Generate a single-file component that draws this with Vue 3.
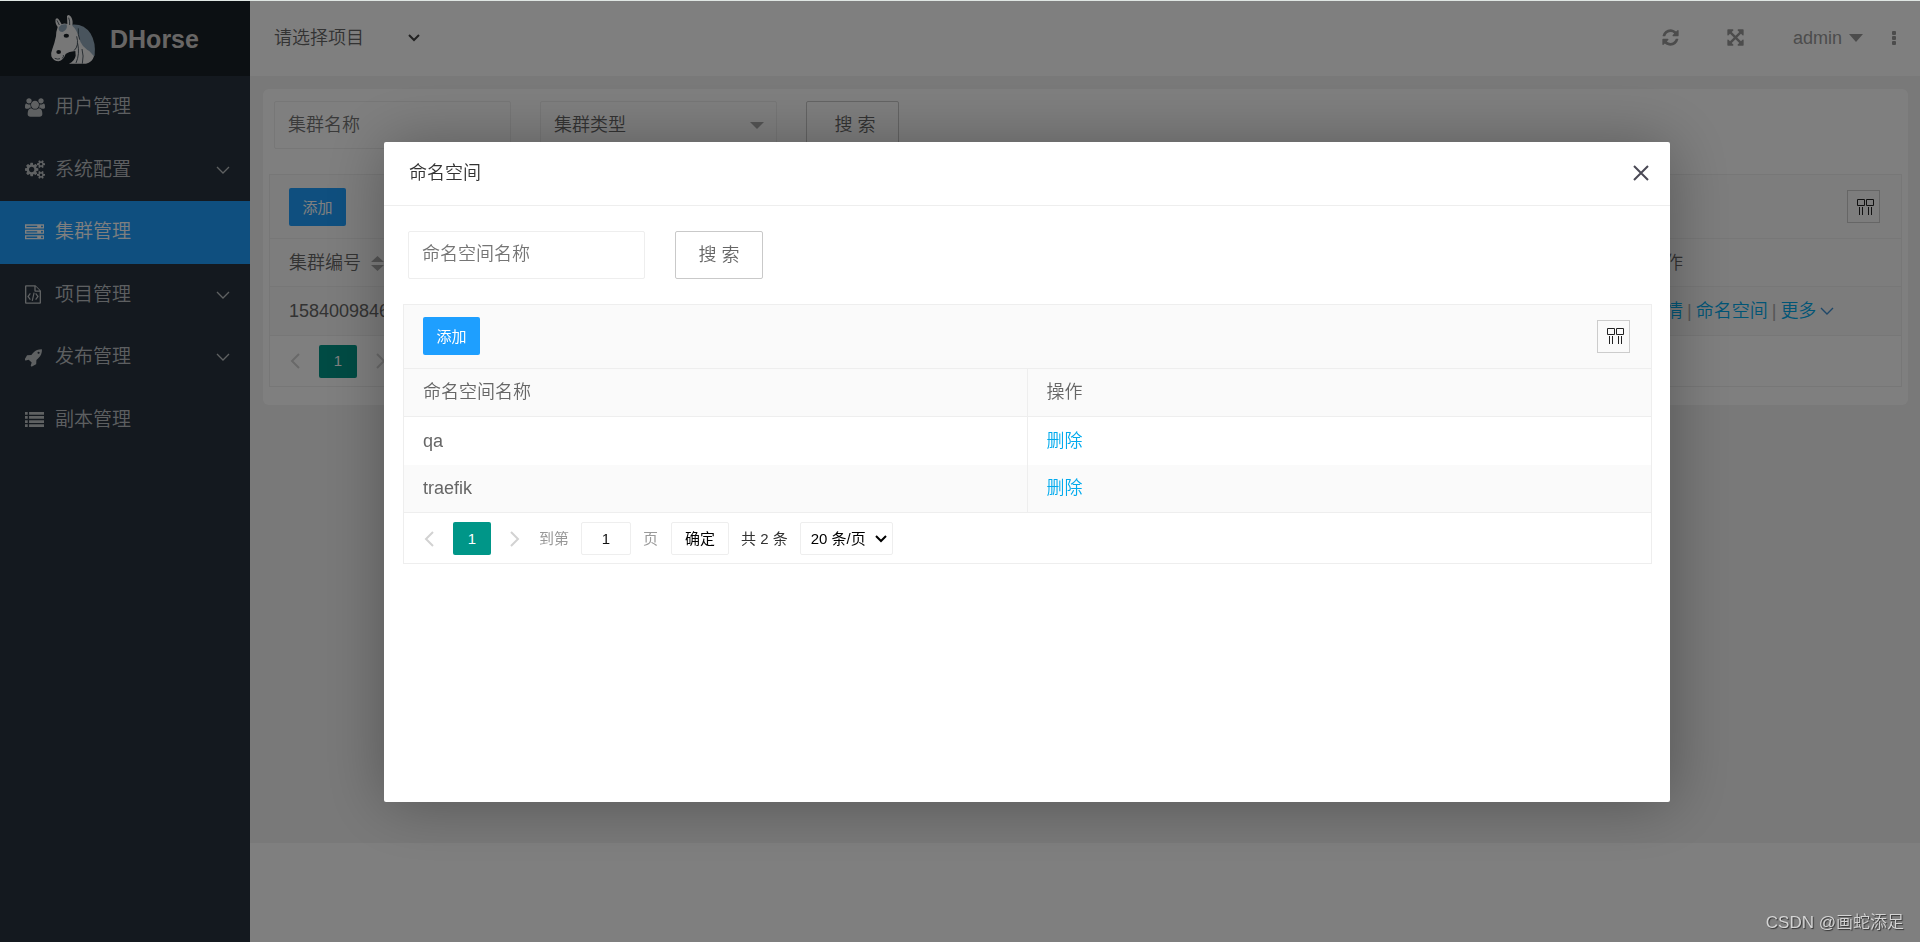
<script setup>
import { ref } from 'vue'

const menu = [
  { label: '用户管理', icon: 'users' },
  { label: '系统配置', icon: 'cogs', children: true },
  { label: '集群管理', icon: 'server', active: true },
  { label: '项目管理', icon: 'code', children: true },
  { label: '发布管理', icon: 'rocket', children: true },
  { label: '副本管理', icon: 'list' }
]

const icons = {
  users: {
    box: '-64 0 1920 1792',
    width: 20,
    path: 'M529 896q-162 5-265 128h-134q-82 0-138-40.5t-56-118.5q0-353 124-353 6 0 43.5 21t97.5 42.5 119 21.5q67 0 133-23-5 37-5 66 0 139 81 256zm1071 637q0 120-73 189.5t-194 69.5h-874q-121 0-194-69.5t-73-189.5q0-53 3.5-103.5t14-109 26.5-108.5 43-97.5 62-81 85.5-53.5 111.5-20q10 0 43 21.5t73 48 107 48 135 21.5 135-21.5 107-48 73-48 43-21.5q61 0 111.5 20t85.5 53.5 62 81 43 97.5 26.5 108.5 14 109 3.5 103.5zm-1024-1277q0 106-75 181t-181 75-181-75-75-181 75-181 181-75 181 75 75 181zm704 384q0 159-112.5 271.5t-271.5 112.5-271.5-112.5-112.5-271.5 112.5-271.5 271.5-112.5 271.5 112.5 112.5 271.5zm576 225q0 78-56 118.5t-138 40.5h-134q-103-123-265-128 81-117 81-256 0-29-5-66 66 23 133 23 59 0 119-21.5t97.5-42.5 43.5-21q124 0 124 353zm-128-609q0 106-75 181t-181 75-181-75-75-181 75-181 181-75 181 75 75 181z'
  },
  cogs: {
    box: '-64 0 1920 1792',
    width: 20,
    path: 'M832 896q0-106-75-181t-181-75-181 75-75 181 75 181 181 75 181-75 75-181zm768 512q0-52-38-90t-90-38-90 38-38 90q0 53 37.5 90.5t90.5 37.5 90.5-37.5 37.5-90.5zm0-1024q0-52-38-90t-90-38-90 38-38 90q0 53 37.5 90.5t90.5 37.5 90.5-37.5 37.5-90.5zm-384 421v185q0 10-7 19.5t-16 10.5l-155 24q-11 35-32 76 34 48 90 115 7 11 7 20 0 12-7 19-23 30-82.5 89.5t-78.5 59.5q-11 0-21-7l-115-90q-37 19-77 31-11 108-23 155-7 24-30 24h-186q-11 0-20-7.5t-10-17.5l-23-153q-34-10-75-31l-118 89q-7 7-20 7-11 0-21-8-144-133-144-160 0-9 7-19 10-14 41-53t47-61q-23-44-35-82l-152-24q-10-1-17-9.5t-7-19.5v-185q0-10 7-19.5t16-10.5l155-24q11-35 32-76-34-48-90-115-7-11-7-20 0-12 7-20 22-30 82-89t79-59q11 0 21 7l115 90q34-18 77-32 11-108 23-154 7-24 30-24h186q11 0 20 7.5t10 17.5l23 153q34 10 75 31l118-89q8-7 20-7 11 0 21 8 144 133 144 160 0 8-7 19-12 16-42 54t-45 60q23 48 34 82l152 23q10 2 17 10.5t7 19.5zm640 533v140q0 16-149 31-12 27-30 52 51 113 51 138 0 4-4 7-122 71-124 71-8 0-46-47t-52-68q-20 2-30 2t-30-2q-14 21-52 68t-46 47q-2 0-124-71-4-3-4-7 0-25 51-138-18-25-30-52-149-15-149-31v-140q0-16 149-31 13-29 30-52-51-113-51-138 0-4 4-7 4-2 35-20t59-34 30-16q8 0 46 46.5t52 67.5q20-2 30-2t30 2q51-71 92-112l6-2q4 0 124 70 4 3 4 7 0 25-51 138 17 23 30 52 149 15 149 31zm0-1024v140q0 16-149 31-12 27-30 52 51 113 51 138 0 4-4 7-122 71-124 71-8 0-46-47t-52-68q-20 2-30 2t-30-2q-14 21-52 68t-46 47q-2 0-124-71-4-3-4-7 0-25 51-138-18-25-30-52-149-15-149-31v-140q0-16 149-31 13-29 30-52-51-113-51-138 0-4 4-7 4-2 35-20t59-34 30-16q8 0 46 46.5t52 67.5q20-2 30-2t30 2q51-71 92-112l6-2q4 0 124 70 4 3 4 7 0 25-51 138 17 23 30 52 149 15 149 31z'
  },
  server: {
    box: '0 0 1792 1792',
    width: 19,
    path: 'M128 1408h1024v-128h-1024v128zm0-512h1024v-128h-1024v128zm1568 448q0-40-28-68t-68-28-68 28-28 68 28 68 68 28 68-28 28-68zm-1568-960h1024v-128h-1024v128zm1568 448q0-40-28-68t-68-28-68 28-28 68 28 68 68 28 68-28 28-68zm0-512q0-40-28-68t-68-28-68 28-28 68 28 68 68 28 68-28 28-68zm96 832v384h-1792v-384h1792zm0-512v384h-1792v-384h1792zm0-512v384h-1792v-384h1792z'
  },
  code: {
    box: '0 0 1536 1792',
    width: 16,
    path: 'M96 0H1000L1536 536V1696Q1536 1792 1440 1792H96Q0 1792 0 1696V96Q0 0 96 0ZM128 128V1664H1408V640H992Q896 640 896 544V128ZM1024 136V512H1400ZM470 760L560 830 370 1090 560 1350 470 1420 230 1120V1060ZM1066 760L976 830 1166 1090 976 1350 1066 1420 1306 1120V1060ZM820 700L930 720 750 1530 640 1505Z'
  },
  rocket: {
    box: '64 0 1792 1792',
    width: 19,
    path: 'M1440 448q0-40-28-68t-68-28-68 28-28 68 28 68 68 28 68-28 28-68zm224-288q0 249-75.5 430.5t-253.5 360.5q-81 80-195 176l-20 379q-2 16-16 26l-384 224q-7 4-16 4-12 0-23-9l-64-64q-13-14-8-32l85-276-281-281-276 85q-3 1-9 1-14 0-23-9l-64-64q-17-19-5-39l224-384q10-14 26-16l379-20q96-114 176-195 188-187 358-258t431-71q14 0 24 9.5t10 22.5z'
  },
  list: {
    box: '0 0 1792 1792',
    width: 19,
    path: 'M0 1344H256V1600H0ZM0 960H256V1216H0ZM0 576H256V832H0ZM0 192H256V448H0ZM384 1344H1792V1600H384ZM384 960H1792V1216H384ZM384 576H1792V832H384ZM384 192H1792V448H384Z'
  }
}

const clusters = [{ id: '1584009846' }]
const namespaces = ref(['qa', 'traefik'])
const jumpPage = ref('1')
</script>

<template>
  <div class="app">
    <aside class="side">
      <div class="logo">
        <svg class="horse" viewBox="150 42 138 156" aria-hidden="true">
          <path fill="#93a9ba" d="M206 78Q250 70 272 104Q288 130 284 170L262 176L232 140Z" />
          <path fill="#eeeeee" d="M167 60Q172 54 177 62L185 76Q192 72 202 75L201 52Q205 43 213 53Q220 64 217 80Q232 84 236 108Q240 128 256 143Q270 158 282 172Q276 192 258 194H207Q224 186 227 170L226 156Q206 158 197 165Q190 184 176 187Q160 187 154 172Q152 162 157 150Q164 132 168 112Q168 98 173 84Q164 72 167 60Z" />
          <path fill="#93a9ba" d="M176 86Q182 74 200 76Q204 92 188 99Q174 98 176 86ZM217 80Q250 84 264 118Q274 140 275 158Q244 150 236 112Q230 92 217 80Z" />
          <path fill="none" stroke="#33404b" stroke-width="2.5" d="M235 88Q233 108 239 122M233 133Q240 165 228 192M230 112Q238 140 222 155M164 178Q174 182 180 179M187 178Q192 172 190 168M246 150Q252 170 247 194M206 56Q210 66 209 78M171 64L178 78" />
          <ellipse cx="199" cy="110" rx="8" ry="6" fill="#1b2126" />
          <ellipse cx="176" cy="159" rx="7" ry="6" fill="#1b2126" />
        </svg>
        <h1>DHorse</h1>
      </div>
      <nav>
        <ul class="menu">
          <li v-for="item in menu" :key="item.label">
            <a href="#" :class="{ active: item.active }">
              <span class="menu-icon">
                <svg :viewBox="icons[item.icon].box" :width="icons[item.icon].width" height="19" fill="currentColor" fill-rule="evenodd">
                  <path :d="icons[item.icon].path" />
                </svg>
              </span>
              <span>{{ item.label }}</span>
              <svg v-if="item.children" class="fold" width="14" height="8" viewBox="0 0 14 8">
                <path d="M1 1L7 7L13 1" fill="none" stroke="currentColor" stroke-width="1.3" />
              </svg>
            </a>
          </li>
        </ul>
      </nav>
    </aside>

    <div class="main">
      <header class="top">
        <div class="project">
          <select aria-label="项目">
            <option>请选择项目</option>
          </select>
          <svg width="12" height="8" viewBox="0 0 12 8">
            <path d="M1 1L6 6L11 1" fill="none" stroke="#444" stroke-width="2" />
          </svg>
        </div>
        <div class="tools">
          <button type="button" aria-label="刷新">
            <svg width="19" height="19" viewBox="0 0 1792 1792" fill="currentColor">
              <path d="M1639 1056q0 5-1 7-64 268-268 434.5t-478 166.5q-146 0-282.5-55t-243.5-157l-129 129q-19 19-45 19t-45-19-19-45v-448q0-26 19-45t45-19h448q26 0 45 19t19 45-19 45l-137 137q71 66 161 102t187 36q134 0 250-65t186-179q11-17 53-117 8-23 30-23h192q13 0 22.5 9.5t9.5 22.5zm25-800v448q0 26-19 45t-45 19h-448q-26 0-45-19t-19-45 19-45l138-138q-148-137-349-137-134 0-250 65t-186 179q-11 17-53 117-8 23-30 23h-199q-13 0-22.5-9.5t-9.5-22.5v-7q65-268 270-434.5t480-166.5q146 0 284 55.5t245 156.5l130-129q19-19 45-19t45 19 19 45z" />
            </svg>
          </button>
          <button type="button" aria-label="全屏">
            <svg width="19" height="19" viewBox="0 0 1792 1792" fill="currentColor">
              <path d="M1411 541l-355 355 355 355 144-144q29-31 70-14 39 17 39 59v448q0 26-19 45t-45 19h-448q-42 0-59-40-17-39 14-69l144-144-355-355-355 355 144 144q31 30 14 69-17 40-59 40h-448q-26 0-45-19t-19-45v-448q0-42 40-59 39-17 69 14l144 144 355-355-355-355-144 144q-19 19-45 19-12 0-24-5-40-17-40-59v-448q0-26 19-45t45-19h448q42 0 59 40 17 39-14 69l-144 144 355 355 355-355-144-144q-31-30-14-69 17-40 59-40h448q26 0 45 19t19 45v448q0 42-39 59-13 5-25 5-26 0-45-19z" />
            </svg>
          </button>
          <a href="#" class="user">
            admin
            <svg width="14" height="8" viewBox="0 0 14 8"><path d="M0 0H14L7 8Z" fill="currentColor" /></svg>
          </a>
          <button type="button" aria-label="更多">
            <svg width="4" height="14" viewBox="0 0 4 14" fill="currentColor">
              <rect width="4" height="4" rx="1" /><rect y="5" width="4" height="4" rx="1" /><rect y="10" width="4" height="4" rx="1" />
            </svg>
          </button>
        </div>
      </header>

      <main class="content">
        <section class="card">
          <form class="search" @submit.prevent>
            <input class="field" type="text" placeholder="集群名称" aria-label="集群名称" />
            <div class="pick">
              <select class="field" aria-label="集群类型">
                <option>集群类型</option>
              </select>
              <svg width="14" height="7" viewBox="0 0 14 7"><path d="M0 0H14L7 7Z" fill="#aaa" /></svg>
            </div>
            <button class="btn wide" type="submit">搜 索</button>
          </form>
          <div class="grid">
            <div class="bar">
              <button class="add" type="button">添加</button>
              <button class="cols" type="button" aria-label="筛选列">
                <svg width="17" height="16" viewBox="0 0 17 16" fill="none" stroke="#222">
                  <path d="M0.5 0.5H7.5V6.5H0.5ZM9.5 0.5H16.5V6.5H9.5ZM2.5 8V16M5.5 8V16M11.5 8V16M14.5 8V16" />
                </svg>
              </button>
            </div>
            <table class="clusters">
              <thead>
                <tr>
                  <th>
                    集群编号
                    <svg class="sort" width="13" height="15" viewBox="0 0 13 15" fill="#aaa"><path d="M0 6L6.5 0L13 6ZM0 9H13L6.5 15Z" /></svg>
                  </th>
                  <th class="ops">操作</th>
                </tr>
              </thead>
              <tbody>
                <tr v-for="c in clusters" :key="c.id">
                  <td>{{ c.id }}</td>
                  <td>
                    <div class="links">
                      <a href="#">详情</a><span>|</span><a href="#">命名空间</a><span>|</span><a href="#">更多</a>
                      <svg width="14" height="8" viewBox="0 0 14 8"><path d="M1 1L7 7L13 1" fill="none" stroke="#3f8fd0" stroke-width="1.4" /></svg>
                    </div>
                  </td>
                </tr>
              </tbody>
            </table>
            <div class="pager">
              <button class="arrow" type="button" aria-label="上一页"><svg width="10" height="16" viewBox="0 0 10 16"><path d="M9 1L2 8L9 15" /></svg></button>
              <button class="current" type="button">1</button>
              <button class="arrow" type="button" aria-label="下一页"><svg width="10" height="16" viewBox="0 0 10 16"><path d="M1 1L8 8L1 15" /></svg></button>
            </div>
          </div>
        </section>
      </main>
    </div>

    <div class="shade">
      <div class="dialog" role="dialog" aria-labelledby="dialog-title">
        <div class="dialog-head">
          <h2 id="dialog-title">命名空间</h2>
          <button type="button" aria-label="关闭">
            <svg width="16" height="16" viewBox="0 0 16 16"><path d="M1 1L15 15M15 1L1 15" fill="none" stroke="#4a4955" stroke-width="2" /></svg>
          </button>
        </div>
        <div class="dialog-body">
          <form class="search" @submit.prevent>
            <input class="field" type="text" placeholder="命名空间名称" aria-label="命名空间名称" />
            <button class="btn" type="submit">搜 索</button>
          </form>
          <div class="grid">
            <div class="bar">
              <button class="add" type="button">添加</button>
              <button class="cols" type="button" aria-label="筛选列">
                <svg width="17" height="16" viewBox="0 0 17 16" fill="none" stroke="#222">
                  <path d="M0.5 0.5H7.5V6.5H0.5ZM9.5 0.5H16.5V6.5H9.5ZM2.5 8V16M5.5 8V16M11.5 8V16M14.5 8V16" />
                </svg>
              </button>
            </div>
            <table class="names">
              <thead>
                <tr><th>命名空间名称</th><th>操作</th></tr>
              </thead>
              <tbody>
                <tr v-for="n in namespaces" :key="n">
                  <td>{{ n }}</td>
                  <td><a href="#">删除</a></td>
                </tr>
              </tbody>
            </table>
            <div class="pager">
              <button class="arrow" type="button" aria-label="上一页"><svg width="10" height="16" viewBox="0 0 10 16"><path d="M9 1L2 8L9 15" /></svg></button>
              <button class="current" type="button">1</button>
              <button class="arrow" type="button" aria-label="下一页"><svg width="10" height="16" viewBox="0 0 10 16"><path d="M1 1L8 8L1 15" /></svg></button>
              <label class="jump">到第 <input v-model="jumpPage" type="text" /> 页</label>
              <button class="go" type="button">确定</button>
              <span class="total">共 2 条</span>
              <div class="limit">
                <select aria-label="每页条数">
                  <option>20 条/页</option>
                </select>
                <svg width="12" height="8" viewBox="0 0 12 8"><path d="M1 1L6 6L11 1" fill="none" stroke="#000" stroke-width="2" /></svg>
              </div>
            </div>
          </div>
        </div>
      </div>
    </div>
    <div class="watermark">CSDN @画蛇添足</div>
  </div>
</template>

<style>
body {
  margin: 0;
  background: #fff;
}
</style>

<style scoped>
.app {
  display: flex;
  min-height: 100vh;
  box-sizing: border-box;
  border-top: 1px solid #dfe6e3;
  font: 350 18px/24px "Liberation Sans", "Noto Sans CJK SC", sans-serif;
  color: #666;
}
.app *,
.app *::before {
  box-sizing: border-box;
}
button,
input,
select {
  font: inherit;
  color: inherit;
  margin: 0;
  padding: 0;
  border: 0;
  background: none;
  outline: 0;
}
select {
  appearance: none;
}
svg {
  flex: none;
}
a {
  color: inherit;
  text-decoration: none;
}

/* Sidebar */
.side {
  flex: none;
  width: 250px;
  background: #28333e;
}
.logo {
  display: flex;
  align-items: center;
  gap: 14px;
  height: 75px;
  padding-left: 50px;
  background: #192027;
}
.horse {
  width: 46px;
  height: 52px;
}
.logo h1 {
  margin: 0;
  font-size: 25px;
  line-height: 32px;
  font-weight: 700;
  color: #d0cdca;
}
.menu {
  display: grid;
  grid-auto-rows: 1fr;
  height: 375px;
  margin: 0;
  padding: 0;
  list-style: none;
}
.menu a {
  display: flex;
  align-items: center;
  height: 100%;
  padding: 0 20px 0 25px;
  font-size: 19px;
  color: rgba(255, 255, 255, 0.7);
}
.menu a.active {
  background: #1e9fff;
  color: #fff;
}
.menu-icon {
  display: flex;
  width: 30px;
}
.fold {
  margin-left: auto;
}

/* Header */
.main {
  flex: 1;
  min-width: 0;
}
.top {
  display: flex;
  align-items: center;
  justify-content: space-between;
  height: 75px;
  padding: 0 24px 2px;
  background: #fff;
}
.project,
.pick,
.limit {
  display: grid;
  align-items: center;
}
.project > *,
.pick > *,
.limit > * {
  grid-area: 1 / 1;
}
.project svg,
.pick svg,
.limit svg {
  justify-self: end;
  pointer-events: none;
}
.project select {
  width: 146px;
  height: 40px;
}
.tools {
  display: flex;
  align-items: center;
  color: #999;
}
.tools button,
.tools svg {
  display: block;
}
.tools button + button {
  margin-left: 46px;
}
.user {
  display: flex;
  align-items: center;
  gap: 7px;
  margin: 0 29px 0 48px;
}

/* Content */
.content {
  min-height: 767px;
  padding: 13px 12px 13px 13px;
  background: #f2f2f2;
}
.card {
  padding: 12px 6px 18px;
  border-radius: 6px;
  background: #fff;
}
.search {
  display: flex;
  gap: 30px;
  padding: 0 5px 25px;
}
.card .search {
  gap: 29px;
}
.field {
  width: 237px;
  height: 48px;
  padding: 0 13px;
  border: 1px solid #eee;
  border-radius: 2px;
}
.field::placeholder {
  color: #757575;
  opacity: 1;
}
.pick svg {
  margin-right: 13px;
}
.btn {
  width: 88px;
  height: 48px;
  border: 1px solid #c9c9c9;
  border-radius: 2px;
  background: #fff;
}
.btn.wide {
  width: 93px;
  padding-left: 5px;
}
.grid {
  border: 1px solid #eee;
}
.bar {
  display: flex;
  align-items: center;
  justify-content: space-between;
  height: 64px;
  padding: 0 21px 0 19px;
  border-bottom: 1px solid #eee;
  background: #fafafa;
}
.add {
  width: 57px;
  height: 38px;
  padding-top: 2px;
  border-radius: 2px;
  background: #1e9fff;
  color: #fff;
  font-size: 15px;
  font-weight: 400;
}
.cols {
  display: flex;
  align-items: center;
  width: 33px;
  height: 33px;
  padding-left: 9px;
  border: 1px solid #ccc;
}
table {
  width: 100%;
  table-layout: fixed;
  border-collapse: separate;
  border-spacing: 0;
}
th,
td {
  height: 48px;
  padding: 0 19px;
  font-weight: inherit;
  text-align: left;
  white-space: nowrap;
}
th {
  border-bottom: 1px solid #eee;
  background: #fafafa;
}
td a {
  color: #01aaed;
}
.ops {
  width: 273px;
}
.links {
  display: flex;
  align-items: center;
  gap: 4px;
  color: #aaa;
}
.sort {
  margin-left: 5px;
  vertical-align: -2px;
}
.clusters td {
  height: 49px;
  border-bottom: 1px solid #eee;
  background: #f8f8f8;
}
.names th:first-child {
  width: calc(50% - 1px);
}
.names th:first-child,
.names td:first-child {
  border-right: 1px solid #eee;
}
.names tbody tr:nth-child(even) {
  background: #fafafa;
}
.names tr:last-child td {
  border-bottom: 1px solid #eee;
}
.pager {
  display: flex;
  align-items: center;
  height: 50px;
  padding-left: 20px;
  font-size: 15px;
  font-weight: 400;
  color: #333;
}
.names + .pager {
  padding-top: 2px;
}
.arrow svg {
  display: block;
  fill: none;
  stroke: #d2d2d2;
  stroke-width: 2;
}
.current {
  width: 38px;
  height: 33px;
  margin: 0 19px;
  border-radius: 2px;
  background: #009688;
  color: #fff;
}
.jump {
  display: flex;
  align-items: center;
  gap: 12px;
  margin-left: 19px;
  color: #999;
}
.jump input {
  width: 50px;
  height: 33px;
  border: 1px solid #eee;
  border-radius: 2px;
  text-align: center;
  color: #111;
}
.go {
  width: 58px;
  height: 33px;
  margin: 0 12px 0 13px;
  border: 1px solid #eee;
  border-radius: 2px;
  color: #000;
}
.limit {
  margin-left: 12px;
}
.limit select {
  width: 93px;
  height: 33px;
  padding-left: 10px;
  border: 1px solid #eee;
  border-radius: 2px;
  color: #000;
}
.limit svg {
  margin-right: 6px;
}

/* Dialog */
.shade {
  position: fixed;
  inset: 1px 0 0;
  display: grid;
  grid-template-columns: 20% 1fr 250px;
  align-items: center;
  padding-top: 1px;
  background: rgba(0, 0, 0, 0.5);
}
.dialog {
  grid-column: 2;
  min-height: calc(70vh + 1px);
  border-radius: 2px;
  background: #fff;
  box-shadow: 1px 1px 62px rgba(0, 0, 0, 0.3);
}
.dialog-head {
  display: flex;
  align-items: center;
  justify-content: space-between;
  height: 64px;
  padding: 0 21px 0 25px;
  border-bottom: 1px solid #eee;
}
.dialog-head h2 {
  margin: 0;
  font-size: 18px;
  font-weight: inherit;
  color: #333;
}
.dialog-head svg {
  display: block;
}
.dialog-body {
  padding: 25px 18px 25px 19px;
}

.watermark {
  position: fixed;
  right: 16px;
  bottom: 7px;
  font-size: 17px;
  color: #d4d4d4;
  text-shadow: 1px 1px 1px #333;
}
</style>
